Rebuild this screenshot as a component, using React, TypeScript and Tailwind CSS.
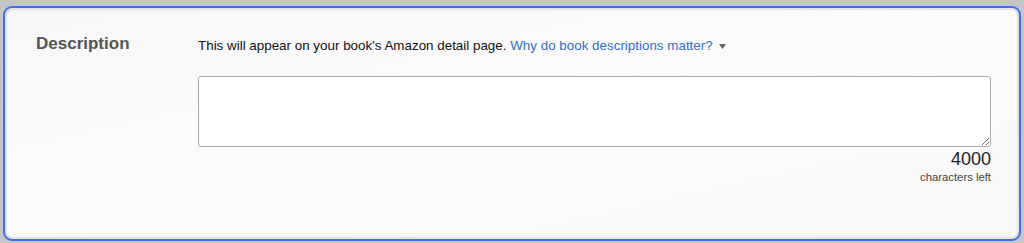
import { useState } from 'react';

// KDP 书籍描述输入区
export default function App() {
  const [text, setText] = useState('');
  const left = 4000 - text.length;

  return (
    <div className="h-[243px] w-[1024px] bg-[#c6c6c6] pt-[6px] pr-[3px] pb-[2px] pl-[3px] font-['Liberation_Sans',Arial,sans-serif]">
      <div className="h-full rounded-[9px] border-2 border-[#3d6ff2] bg-[#e4e4e4] p-[2px]">
        <div className="flex h-full rounded-[6px] bg-gradient-to-br from-[#f7f7f7] via-[#fcfcfc] to-[#f8f8f8] pl-[29px] pt-[23px]">
          <div className="w-[162px] shrink-0 text-[17px] font-bold leading-[22px] text-[#555]">
            Description
          </div>
          <div className="flex w-[793px] flex-col">
            <p className="mt-[4px] text-[13.4px] leading-[18px] text-[#111]">
              This will appear on your book's Amazon detail page.{' '}
              <a href="#" className="text-[#2e6fcb]">
                Why do book descriptions matter?
              </a>
              <span className="ml-[6px] inline-block align-middle">
                <svg width="7" height="5" viewBox="0 0 7 5">
                  <path d="M0 0h7L3.5 5z" fill="#666" />
                </svg>
              </span>
            </p>
            <textarea
              value={text}
              onChange={(e) => setText(e.target.value)}
              maxLength={4000}
              className="mt-[21px] h-[71px] w-full rounded-[3px] border border-[#a9a9a9] bg-white px-2 py-1 text-[13px] outline-none"
            />
            <div className="mt-[1px] text-right text-[18px] leading-[22px] text-[#222]">
              {left}
            </div>
            <div className="text-right text-[11.3px] leading-[14px] text-[#444]">
              characters left
            </div>
          </div>
        </div>
      </div>
    </div>
  );
}
